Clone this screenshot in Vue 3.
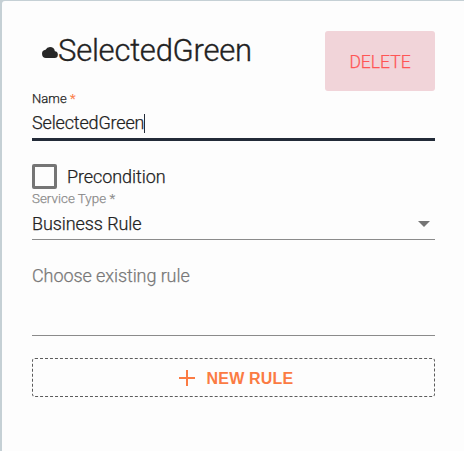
<script setup>
import { ref } from 'vue'

const name = ref('SelectedGreen')
const serviceType = ref('Business Rule')
</script>

<template>
  <main class="panel">
    <header class="header">
      <svg class="cloud" viewBox="0 0 24 16" preserveAspectRatio="none" aria-hidden="true">
        <path d="M19.35 6.04A7.49 7.49 0 0 0 12 0 7.5 7.5 0 0 0 5.35 4.04 6 6 0 0 0 6 16h13a5 5 0 0 0 .35-9.96z" />
      </svg>
      <h1 class="title">{{ name }}</h1>
      <button class="delete" type="button">DELETE</button>
    </header>

    <div class="field focused">
      <span class="label">Name <span class="required">*</span></span>
      <div class="value"><span class="text">{{ name }}</span><i class="caret"></i></div>
    </div>

    <div class="check-row">
      <span class="checkbox" role="checkbox" aria-checked="false"></span>
      <span class="check-label">Precondition</span>
    </div>

    <div class="field select">
      <span class="label service-label">Service Type *</span>
      <div class="value">
        <span class="text service-text">{{ serviceType }}</span>
        <svg class="arrow" viewBox="0 0 12 6" aria-hidden="true"><path d="M0 0h12L6 6z" /></svg>
      </div>
    </div>

    <div class="existing"><span class="placeholder">Choose existing rule</span></div>

    <button class="new-rule" type="button">
      <svg class="plus" viewBox="0 0 16 16" aria-hidden="true"><path d="M8 0v16M0 8h16" /></svg>
      <span class="new-text">NEW RULE</span>
    </button>
  </main>
</template>

<style>
body {
  background: #c5d0d5;
}
</style>

<style scoped>
.panel {
  box-sizing: border-box;
  height: 450px;
  margin: 1px 0 0 2px;
  padding: 30px 29px 0 30px;
  border-top-left-radius: 3px;
  background: #fdfdfd;
  font-family: Roboto, sans-serif;
  font-size: 18px;
  font-weight: 300;
  letter-spacing: -0.16px;
  color: #222;
  -webkit-text-stroke: 0.25px currentColor;
}
.header {
  display: flex;
  height: 60px;
}
.cloud {
  width: 16px;
  height: 11px;
  margin: 16px 0 0 10px;
  fill: #272727;
}
.title {
  margin: 0;
  font-size: 31px;
  font-weight: 300;
  line-height: 40px;
  letter-spacing: -0.25px;
  -webkit-text-stroke-width: 0.35px;
}
button {
  margin: 0;
  font-family: inherit;
}
.delete {
  width: 110px;
  height: 60px;
  margin-left: auto;
  padding: 1px 0 0;
  border: 0;
  border-radius: 3px;
  background: #f1d4d9;
  color: #ff5555;
  font-size: 17.5px;
  font-weight: 300;
  -webkit-text-stroke: 0.25px currentColor;
}
.field {
  display: flex;
  flex-direction: column;
}
.focused {
  height: 47px;
  border-bottom: 3px solid #232b38;
}
.label {
  height: 15px;
  font-size: 13px;
  line-height: 15px;
  letter-spacing: 0.05px;
}
.required {
  color: #fb7b43;
  -webkit-text-stroke-color: #fb7b43;
}
.value {
  display: flex;
  align-items: center;
  height: 34px;
}
.text {
  line-height: 34px;
}
.service-text,
.check-label,
.placeholder {
  letter-spacing: -0.08px;
}
.caret {
  width: 1px;
  height: 19px;
  background: #232b38;
}
.check-row {
  display: flex;
  align-items: center;
  gap: 10px;
  height: 25px;
  margin-top: 23px;
}
.checkbox {
  box-sizing: border-box;
  width: 25px;
  height: 25px;
  border: 3px solid #757575;
  border-radius: 2px;
}
.select {
  height: 48px;
  padding-top: 2px;
  border-bottom: 1px solid #8b8b8b;
}
.select .value {
  padding-top: 1px;
}
.service-label {
  color: #8b8b8b;
  font-size: 13.3px;
  -webkit-text-stroke-color: #8b8b8b;
}
.arrow {
  width: 12px;
  height: 6px;
  margin: 0 5px 0 auto;
  fill: #757575;
}
.existing {
  height: 95px;
  border-bottom: 1px solid #8b8b8b;
}
.placeholder {
  display: block;
  padding-top: 25px;
  line-height: 22px;
  color: #787878;
  -webkit-text-stroke-color: #787878;
}
.new-rule {
  display: flex;
  align-items: center;
  justify-content: center;
  gap: 12px;
  width: 100%;
  height: 39px;
  margin-top: 22px;
  padding: 0 0 0 5px;
  border: 1px dashed #5c5c5c;
  border-radius: 3px;
  background: transparent;
  color: #fb7b43;
  -webkit-text-stroke: 0;
}
.plus {
  width: 16px;
  height: 16px;
  stroke: currentColor;
  stroke-width: 2;
}
.new-text {
  padding-top: 2px;
  font-family: "Liberation Sans", sans-serif;
  font-size: 16px;
  font-weight: 700;
  letter-spacing: 0.2px;
}
</style>
